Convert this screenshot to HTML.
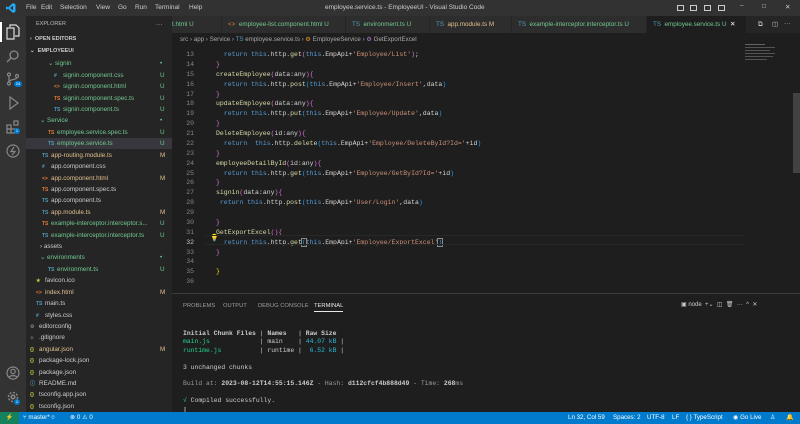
<!DOCTYPE html>
<html><head><meta charset="utf-8">
<style>
*{margin:0;padding:0;box-sizing:border-box}
body{width:800px;height:424px;overflow:hidden;background:#1e1e1e;font-family:"Liberation Sans",sans-serif;position:relative;color:#ccc}
.abs{position:absolute}
#title{left:0;top:0;width:800px;height:16px;background:#323233;font-size:6.5px;color:#ccc}
#title span{position:absolute;top:4px}
#act{left:0;top:16px;width:26px;height:396px;background:#333333}
#side{left:26px;top:16px;width:146px;height:396px;background:#252526;font-size:6.3px}
.row{position:absolute;left:0;width:146px;height:11px;line-height:11px;white-space:nowrap}
.g{color:#73c991}.m{color:#e2c08d}.w{color:#cccccc}
.ic{display:inline-block;width:6px;font-size:5px;font-weight:bold;margin-right:3px}
#tabs{left:172px;top:16px;width:628px;height:17px;background:#252526;font-size:6.3px}
.tab{position:absolute;top:0;height:17px;line-height:17px;white-space:nowrap;background:#2d2d2d;border-right:1px solid #252526;padding-left:6px}
#bc{left:172px;top:33px;width:628px;height:13px;font-size:6.2px;color:#a9a9a9;line-height:13px;padding-left:8px;background:#1e1e1e}
pre{font-family:"Liberation Mono",monospace;font-size:6.5px;line-height:9.87px;position:absolute;white-space:pre}
#ln{left:176px;top:50px;width:18px;text-align:right;color:#858585}
#code{left:216px;top:50px;color:#d4d4d4}
.k{color:#569cd6}.s{color:#ce9178}.f{color:#dcdcaa}.y{color:#ffd700}.p{color:#da70d6}.bl{color:#179fff}
#panel{left:172px;top:293px;width:628px;height:119px;border-top:1px solid #3c3c3c;background:#1e1e1e}
#ptabs{font-size:5.8px;color:#9d9d9d}
#ptabs span{position:absolute;top:9px}
#term{left:183px;top:330px;color:#cccccc;font-size:6.4px;line-height:8.4px}
#status{left:0;top:412px;width:800px;height:12px;background:#007acc;font-size:6.2px;color:#fff;line-height:12px}
#status span{position:absolute;top:0}
</style></head><body>
<div id="title" class="abs">
<svg class="abs" style="left:6px;top:3px" width="10" height="10" viewBox="0 0 10 10"><path d="M7 0L9.5 1.2V8.8L7 10L2 5.6L0.8 6.6L0 6.2V3.8L0.8 3.4L2 4.4L7 0ZM7 2.8L4 5L7 7.2Z" fill="#23a9f2"/></svg>
<span style="left:26px">File</span><span style="left:41px">Edit</span><span style="left:60px">Selection</span><span style="left:96px">View</span><span style="left:118px">Go</span><span style="left:135px">Run</span><span style="left:155px">Terminal</span><span style="left:189px">Help</span>
<span style="left:325px">employee.service.ts - EmployeeUI - Visual Studio Code</span>
<div class="abs" style="left:677px;top:5px;width:7px;height:6px;border:1px solid #ccc"></div>
<div class="abs" style="left:690px;top:5px;width:7px;height:6px;border:1px solid #ccc"></div>
<div class="abs" style="left:704px;top:5px;width:7px;height:6px;border:1px solid #ccc"></div>
<div class="abs" style="left:718px;top:5px;width:7px;height:6px;border:1px solid #ccc"></div>
<span style="left:740px;top:2px">–</span><span style="left:762px;top:3px">□</span><span style="left:785px;top:3px">✕</span>
</div>
<div id="act" class="abs">
<div class="abs" style="left:0;top:6px;width:2px;height:20px;background:#fff"></div>
<svg class="abs" style="left:6px;top:8px" width="14" height="16" viewBox="0 0 14 16" fill="none" stroke="#ddd" stroke-width="1.2"><path d="M4 3V1H10L13 4V12H9"/><path d="M1 4H8V15H1Z"/></svg>
<svg class="abs" style="left:6px;top:33px" width="14" height="14" viewBox="0 0 14 14" fill="none" stroke="#888" stroke-width="1.3"><circle cx="8" cy="6" r="4"/><path d="M5 9L1 13"/></svg>
<svg class="abs" style="left:6px;top:56px" width="14" height="14" viewBox="0 0 14 14" fill="none" stroke="#888" stroke-width="1.2"><circle cx="3" cy="2.5" r="1.5"/><circle cx="3" cy="11.5" r="1.5"/><circle cx="11" cy="4" r="1.5"/><path d="M3 4V10M11 5.5C11 8 3 7 3 10"/></svg>
<div class="abs" style="left:14px;top:65px;width:8px;height:6px;border-radius:3px;background:#007acc;font-size:4px;color:#fff;text-align:center;line-height:6px">24</div>
<svg class="abs" style="left:6px;top:80px" width="14" height="14" viewBox="0 0 14 14" fill="none" stroke="#888" stroke-width="1.2"><path d="M4 1L12 7L4 13Z"/></svg>
<svg class="abs" style="left:6px;top:104px" width="14" height="14" viewBox="0 0 14 14" fill="none" stroke="#888" stroke-width="1.2"><rect x="1" y="5" width="4" height="4"/><rect x="5" y="9" width="4" height="4"/><rect x="1" y="9" width="4" height="4"/><rect x="8" y="1" width="4" height="4"/></svg>
<div class="abs" style="left:14px;top:112px;width:6px;height:6px;border-radius:3px;background:#007acc;font-size:4px;color:#fff;text-align:center;line-height:6px">1</div>
<svg class="abs" style="left:6px;top:128px" width="14" height="14" viewBox="0 0 14 14" fill="none" stroke="#888" stroke-width="1.2"><circle cx="7" cy="7" r="6"/><path d="M8 3L5 7.5H9L6 11"/></svg>
<svg class="abs" style="left:6px;top:350px" width="14" height="14" viewBox="0 0 14 14" fill="none" stroke="#888" stroke-width="1.2"><circle cx="7" cy="7" r="6"/><circle cx="7" cy="5.5" r="2.2"/><path d="M3 11.5C4 9 10 9 11 11.5"/></svg>
<svg class="abs" style="left:6px;top:374px" width="14" height="14" viewBox="0 0 14 14" fill="none" stroke="#888" stroke-width="1.5"><circle cx="7" cy="7" r="4.5" stroke-dasharray="2 1.5"/><circle cx="7" cy="7" r="1.8"/></svg>
<div class="abs" style="left:14px;top:383px;width:6px;height:6px;border-radius:3px;background:#007acc;font-size:4px;color:#fff;text-align:center;line-height:6px">1</div>
</div>
<div id="side" class="abs">
<div class="row" style="top:3px;left:10px;font-size:5.5px;color:#bbb">EXPLORER</div>
<div class="row" style="top:3px;left:130px;width:10px">···</div>
<div class="row" style="top:18px;left:4px;font-size:5.5px;font-weight:bold;color:#ccc">›&nbsp; OPEN EDITORS</div>
<div class="row" style="top:30px;left:4px;font-size:5.5px;font-weight:bold;color:#ccc">⌄&nbsp; EMPLOYEEUI</div>
<div id="rows"></div>
</div>
<div id="tabs" class="abs">
<div class="tab g" style="left:0;width:50px;padding-left:0">t.html <span>U</span></div>
<div class="tab g" style="left:50px;width:124px"><span style="color:#e37933">&lt;&gt;</span>&nbsp; employee-list.component.html U</div>
<div class="tab g" style="left:174px;width:84px"><span style="color:#519aba">TS</span>&nbsp; environment.ts U</div>
<div class="tab m" style="left:258px;width:82px"><span style="color:#519aba">TS</span>&nbsp; app.module.ts M</div>
<div class="tab g" style="left:340px;width:135px"><span style="color:#519aba">TS</span>&nbsp; example-interceptor.interceptor.ts U</div>
<div class="tab g" style="left:475px;width:100px;background:#1e1e1e"><span style="color:#519aba">TS</span>&nbsp; employee.service.ts U&nbsp; <span style="color:#fff">✕</span></div>
<span class="abs" style="left:586px;top:5px;color:#ccc">⧉</span><span class="abs" style="left:600px;top:5px">◫</span><span class="abs" style="left:612px;top:4px">···</span>
</div>
<div id="bc" class="abs">src › app › Service › <span style="color:#519aba">TS</span> employee.service.ts › <span style="color:#ee9d28">⚙</span> EmployeeService › <span style="color:#b180d7">⚙</span> GetExportExcel</div>
<pre id="ln">13
14
15
16
17
18
19
20
21
22
23
24
25
26
27
28
29
30
31
<span style="color:#c6c6c6">32</span>
33
34
35
36</pre>
<pre id="code">  <span class="k">return</span> <span class="k">this</span>.http.<span class="f">get</span><span class="p">(</span><span class="k">this</span>.EmpApi+<span class="s">'Employee/List'</span><span class="p">)</span>;
<span class="p">}</span>
<span class="f">createEmployee</span><span class="p">(</span>data:any<span class="p">){</span>
  <span class="k">return</span> <span class="k">this</span>.http.<span class="f">post</span><span class="bl">(</span><span class="k">this</span>.EmpApi+<span class="s">'Employee/Insert'</span>,data<span class="bl">)</span>
<span class="p">}</span>
<span class="f">updateEmployee</span><span class="p">(</span>data:any<span class="p">){</span>
  <span class="k">return</span> <span class="k">this</span>.http.<span class="f">put</span><span class="bl">(</span><span class="k">this</span>.EmpApi+<span class="s">'Employee/Update'</span>,data<span class="bl">)</span>
<span class="p">}</span>
<span class="f">DeleteEmployee</span><span class="p">(</span>id:any<span class="p">){</span>
  <span class="k">return</span>  <span class="k">this</span>.http.<span class="f">delete</span><span class="bl">(</span><span class="k">this</span>.EmpApi+<span class="s">'Employee/DeleteById?Id='</span>+id<span class="bl">)</span>
<span class="p">}</span>
<span class="f">employeeDetailById</span><span class="p">(</span>id:any<span class="p">){</span>
  <span class="k">return</span> <span class="k">this</span>.http.<span class="f">get</span><span class="bl">(</span><span class="k">this</span>.EmpApi+<span class="s">'Employee/GetById?Id='</span>+id<span class="bl">)</span>
<span class="p">}</span>
<span class="f">signin</span><span class="p">(</span>data:any<span class="p">){</span>
 <span class="k">return</span> <span class="k">this</span>.http.<span class="f">post</span><span class="bl">(</span><span class="k">this</span>.EmpApi+<span class="s">'User/Login'</span>,data<span class="bl">)</span>

<span class="p">}</span>
<span class="f">GetExportExcel</span><span class="p">(){</span>
  <span class="k">return</span> <span class="k">this</span>.http.<span class="f">get</span><span class="bl" style="outline:1px solid #888">(</span><span class="k">this</span>.EmpApi+<span class="s">'Employee/ExportExcel'</span><span class="bl" style="outline:1px solid #888">)</span>
<span class="p">}</span>

<span class="y">}</span>
</pre>
<div class="abs" style="left:210px;top:234px;color:#ffcc00;font-size:7px">💡</div>
<div class="abs" style="left:205px;top:235px;width:540px;height:10px;border-top:1px solid #282828;border-bottom:1px solid #282828"></div>
<div class="abs" style="left:745px;top:42px;width:40px;height:30px;opacity:.5">
<div style="height:1px;width:20px;background:#aaa;margin:2px 0"></div><div style="height:1px;width:30px;background:#888;margin:2px 0"></div><div style="height:1px;width:25px;background:#888;margin:2px 0"></div><div style="height:1px;width:30px;background:#888;margin:2px 0"></div><div style="height:1px;width:28px;background:#888;margin:2px 0"></div><div style="height:1px;width:22px;background:#888;margin:2px 0"></div>
</div>
<div class="abs" style="left:793px;top:93px;width:7px;height:80px;background:#424242"></div>
<div id="panel" class="abs">
<div id="ptabs"><span style="left:11px">PROBLEMS</span><span style="left:51px">OUTPUT</span><span style="left:86px">DEBUG CONSOLE</span><span style="left:142px;color:#e7e7e7;border-bottom:1px solid #e7e7e7;padding-bottom:2px">TERMINAL</span></div>
<div class="abs" style="left:509px;top:7px;font-size:6px;color:#ccc">▣ node &nbsp;+⌄ &nbsp;◫ &nbsp;🗑 &nbsp;··· &nbsp;^ &nbsp;✕</div>
</div>
<pre id="term"><b>Initial Chunk Files</b> | <b>Names</b>   | <b>Raw Size</b>
<span style="color:#23d18b">main.js</span>             | main    | <span style="color:#29b8db">44.07 kB</span> |
<span style="color:#23d18b">runtime.js</span>          | runtime | <span style="color:#29b8db"> 6.52 kB</span> |

3 unchanged chunks

<span style="color:#999">Build at:</span> <b>2023-08-12T14:55:15.146Z</b> <span style="color:#999">- Hash:</span> <b>d112cfcf4b888d49</b> <span style="color:#999">- Time:</span> <b>268</b><span style="color:#999">ms</span>

<span style="color:#23d18b">√</span> Compiled successfully.
▯</pre>
<div id="status" class="abs">
<div class="abs" style="left:0;top:0;width:19px;height:12px;background:#16825d;text-align:center">⚡</div>
<span style="left:23px">⑂ master* ⟳</span><span style="left:70px">⊗ 0 ⚠ 0</span>
<span style="left:568px">Ln 32, Col 59</span><span style="left:613px">Spaces: 2</span><span style="left:647px">UTF-8</span><span style="left:672px">LF</span><span style="left:686px">{ } TypeScript</span><span style="left:733px">◉ Go Live</span><span style="left:770px">♙</span><span style="left:786px">🔔</span>
</div>
<script>
var rows=[
[63,"g","⌄ signin","•",48],
[75,"g","css","signin.component.css","U",54],
[86,"g","html","signin.component.html","U",54],
[98,"g","spec","signin.component.spec.ts","U",54],
[109,"g","ts","signin.component.ts","U",54],
[120,"g","⌄ Service","•",40],
[132,"g","spec","employee.service.spec.ts","U",48],
[143,"g","ts","employee.service.ts","U",48],
[155,"m","ts","app-routing.module.ts","M",42],
[166,"w","css","app.component.css","",42],
[178,"m","html","app.component.html","M",42],
[189,"w","spec","app.component.spec.ts","",42],
[200,"w","ts","app.component.ts","",42],
[212,"m","ts","app.module.ts","M",42],
[223,"g","spec","example-interceptor.interceptor.s...","U",42],
[235,"g","ts","example-interceptor.interceptor.ts","U",42],
[246,"w","› assets","",40],
[257,"g","⌄ environments","•",40],
[269,"g","ts","environment.ts","U",48],
[280,"w","star","favicon.ico","",36],
[292,"m","html","index.html","M",36],
[303,"w","ts","main.ts","",36],
[315,"w","css","styles.css","",36],
[326,"w","gear","editorconfig","",30],
[337,"w","git",".gitignore","",30],
[349,"m","json","angular.json","M",30],
[360,"w","json","package-lock.json","",30],
[372,"w","json","package.json","",30],
[383,"w","info","README.md","",30],
[394,"w","json","tsconfig.app.json","",30],
[406,"w","json","tsconfig.json","",30]];
var ic={css:["#","#519aba"],html:["<>","#e37933"],spec:["TS","#e37933"],ts:["TS","#519aba"],json:["{}","#cbcb41"],star:["★","#cbcb41"],gear:["⚙","#6d8086"],git:["◆","#41535b"],info:["ⓘ","#519aba"]};
var h="";
rows.forEach(function(r){
 var top=r[0]-16-5, cls=r[1], x, badge;
 if(r.length==5){x=r[4]-26;h+='<div class="row '+cls+'" style="top:'+top+'px;left:'+x+'px">'+r[2]+'</div>';badge=r[3];}
 else{x=r[5]-26;var c=ic[r[2]];h+='<div class="row '+cls+'" style="top:'+top+'px;left:'+x+'px"><span class="ic" style="color:'+c[1]+'">'+c[0]+'</span>'+r[3]+'</div>';badge=r[4];}
 if(badge)h+='<div class="row '+cls+'" style="top:'+top+'px;left:134px;width:10px">'+badge+'</div>';
 if(r[3]=="employee.service.ts")h='<div class="abs" style="left:0;top:'+top+'px;width:146px;height:11px;background:#37373d"></div>'+h;
});
document.getElementById("rows").innerHTML=h;
</script>
</body></html>
